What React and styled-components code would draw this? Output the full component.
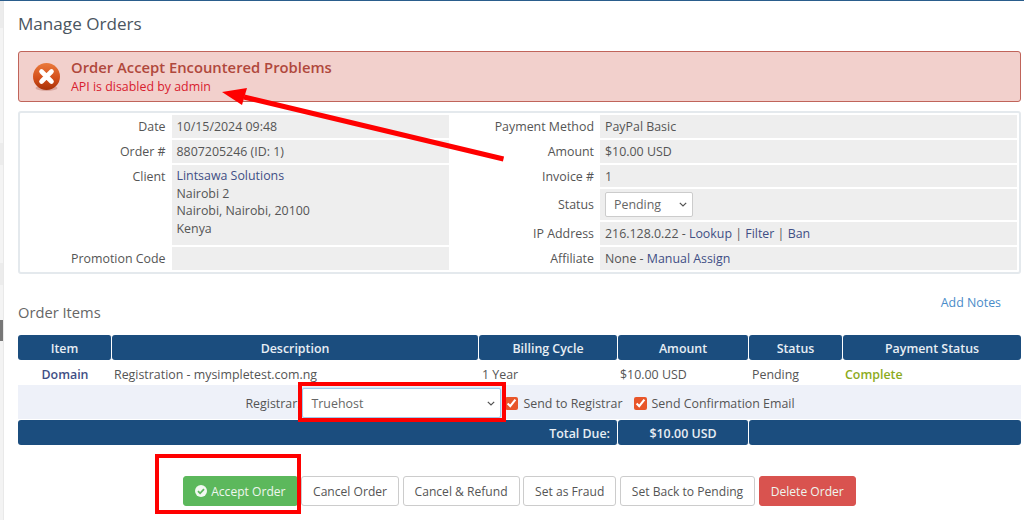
import React from 'react'
import styled, {createGlobalStyle} from 'styled-components'

const GlobalStyle = createGlobalStyle`
  html, body {
    margin: 0;
    padding: 0;
    background: #fff;
    font-family: "Open Sans", "Noto Sans", sans-serif;
    font-size: 12.4px;
    color: #555;
    overflow: hidden;
  }
`

const Page = styled.div`
  position: relative;
  display: flex;
  width: 1024px;
  height: 520px;
  overflow: hidden;
  border-top: 1px solid #2a5d8c;
  box-sizing: border-box;
`

const Sidebar = styled.div`
  display: flex;
  flex-direction: column;
  flex: 0 0 4px;
  background: #f3f3f3;
  border-right: 1px solid #e9e9e9;
  box-sizing: border-box;
`

const SidePatch = styled.div`
  flex: 0 0 ${p => p.$h}px;
  background: ${p => p.$color};
`

const Main = styled.div`
  flex: 1;
  min-width: 0;
  padding: 11px 3px 0 14px;
`

const Title = styled.h1`
  margin: 0 0 16px;
  font-size: 17.1px;
  line-height: 23px;
  font-weight: 400;
  color: #4a5560;
`

const Alert = styled.div`
  display: flex;
  align-items: center;
  height: 49px;
  padding-left: 14px;
  background: #f2d0cc;
  border: 1px solid #c0645a;
  border-radius: 3px;
  margin-bottom: 9px;
`

const AlertText = styled.div`
  margin-left: 11px;
`

const AlertTitle = styled.div`
  font-size: 14.8px;
  line-height: 18px;
  font-weight: 600;
  color: #b0483c;
`

const AlertBody = styled.div`
  margin-top: 2px;
  line-height: 18px;
  color: #d8202f;
`

const Details = styled.div`
  display: grid;
  grid-template-columns: 149.5px 277.5px 151px 417px;
  grid-template-rows: 23px 23px 22px 31px 23px 23px;
  row-gap: 2px;
  padding: 2px;
  border: 2px solid #e4e9ed;
  border-radius: 3px;
  margin-bottom: 20px;
`

const Label = styled.div`
  padding-right: 6px;
  text-align: right;
  line-height: 23px;
  align-self: ${p => (p.$center ? 'center' : 'start')};
`

const Value = styled.div`
  padding: 0 5px;
  line-height: 23px;
  background: #eee;
  display: flex;
  align-items: center;
`

const AddressValue = styled.div`
  grid-row: span 3;
  padding: 2px 5px 0;
  line-height: 17.6px;
  background: #eee;
`

const Link = styled.a`
  color: #3f4f85;
  text-decoration: none;
`

const chevron = encodeURIComponent(
  '<svg xmlns="http://www.w3.org/2000/svg" width="8" height="5" viewBox="0 0 8 5"><path d="M.8.8L4 4l3.2-3.2" fill="none" stroke="#555" stroke-width="1.2"/></svg>'
)

const Select = styled.select`
  appearance: none;
  width: ${p => p.$w}px;
  height: ${p => p.$h}px;
  margin-left: ${p => p.$gap || 0}px;
  padding: 0 0 0 8px;
  font: inherit;
  color: #666;
  background: #fff url("data:image/svg+xml,${chevron}") no-repeat right 5px center;
  border: 1px solid ${p => (p.$focus ? '#9ecaed' : '#ccc')};
  border-radius: 2px;
  box-shadow: ${p => (p.$focus ? '0 0 2px #9ecaed' : 'none')};
`

const ItemsHead = styled.div`
  display: flex;
  justify-content: space-between;
  align-items: flex-start;
  height: 41px;
`

const SubTitle = styled.h2`
  margin: 8px 0 0;
  font-size: 14.7px;
  line-height: 20px;
  font-weight: 400;
  color: #666;
`

const AddNotes = styled.a`
  margin: 0 20px 0 0;
  line-height: 18px;
  color: #4a8cc9;
`

const Items = styled.table`
  width: 1003px;
  border-collapse: separate;
  border-spacing: 0;
  table-layout: fixed;
  margin-bottom: 31px;
`

const HeadCell = styled.th`
  height: 24px;
  padding: 1px ${p => (p.$align === 'right' ? '7px' : '0')} 0 0;
  background: #1b4d7e;
  color: #e8eef4;
  font-size: 12.4px;
  font-weight: 600;
  border-right: 1px solid #fff;
  border-radius: 3px;
  text-align: ${p => p.$align || 'center'};
  &:last-child {
    border-right: 0;
  }
`

const Cell = styled.td`
  height: 22px;
  padding: 3px 0 0 ${p => p.$pad}px;
  text-align: ${p => p.$align || 'left'};
  font-weight: ${p => (p.$strong ? 600 : 400)};
  color: ${p => p.$color || '#555'};
`

const AddonCell = styled.td`
  height: 34px;
  padding: 0;
  background: #eef1f9;
  border-bottom: 1px solid #fff;
`

const RegistrarRow = styled.div`
  display: flex;
  align-items: center;
  justify-content: center;
  padding: 2px 0 0 1px;
`

const Check = styled.label`
  display: flex;
  align-items: center;
  gap: 5px;
  margin-left: ${p => p.$gap}px;
  padding-top: 1px;
`

const CheckInput = styled.input`
  width: 13px;
  height: 13px;
  margin: 0;
  accent-color: #e8562a;
`

const Actions = styled.div`
  display: flex;
  justify-content: center;
  gap: 3.5px;
`

const Button = styled.button`
  display: flex;
  align-items: center;
  gap: 4px;
  height: 30px;
  padding: 0 11px;
  font: inherit;
  font-size: 12.1px;
  border-radius: 3px;
  border: 1px solid ${p => (p.$kind === 'success' ? '#5cb85c' : p.$kind === 'danger' ? '#d9534f' : '#ccc')};
  background: ${p => (p.$kind === 'success' ? '#5cb85c' : p.$kind === 'danger' ? '#d9534f' : '#fff')};
  color: ${p => (p.$kind ? '#eef6ee' : '#555')};
`

const Overlay = styled.svg`
  position: absolute;
  left: 0;
  top: -1px;
  pointer-events: none;
`

const RedBox = styled.div`
  position: absolute;
  left: ${p => p.$x}px;
  top: ${p => p.$y}px;
  width: ${p => p.$w}px;
  height: ${p => p.$h}px;
  box-sizing: border-box;
  border: 4px solid #f00;
  pointer-events: none;
`

const ErrorIcon = () => (
  <svg width="27" height="28" viewBox="0 0 27 28">
    <defs>
      <linearGradient id="err" x1="0" y1="0" x2="0" y2="1">
        <stop offset="0" stopColor="#ea7a3c" />
        <stop offset="0.55" stopColor="#d4501c" />
        <stop offset="1" stopColor="#a83208" />
      </linearGradient>
    </defs>
    <ellipse cx="13.5" cy="25" rx="11" ry="3" fill="#d9a79f" />
    <circle cx="13.5" cy="13.5" r="13.5" fill="url(#err)" />
    <path d="M8.5 8.5l10 10M18.5 8.5l-10 10" stroke="#fff" strokeWidth="4.6" strokeLinecap="round" />
  </svg>
)

const CheckCircle = () => (
  <svg width="12" height="12" viewBox="0 0 12 12">
    <circle cx="6" cy="6" r="6" fill="#f2f8f2" />
    <path d="M3 6.2l2.1 2.1L9 4.2" fill="none" stroke="#5cb85c" strokeWidth="1.8" />
  </svg>
)

const heads = ['Item', 'Description', 'Billing Cycle', 'Amount', 'Status', 'Payment Status']
const widths = [94, 367, 139, 131, 94, 178]

const App = () => {
  return (
    <Page>
      <GlobalStyle />
      <Sidebar>
        <SidePatch $h={27} $color="#ececec" />
        <SidePatch $h={115} $color="#f4f4f4" />
        <SidePatch $h={22} $color="#ececec" />
        <SidePatch $h={98} $color="#f4f4f4" />
        <SidePatch $h={22} $color="#ececec" />
        <SidePatch $h={35} $color="#f4f4f4" />
        <SidePatch $h={21} $color="#777" />
      </Sidebar>
      <Main>
        <Title>Manage Orders</Title>
        <Alert>
          <ErrorIcon />
          <AlertText>
            <AlertTitle>Order Accept Encountered Problems</AlertTitle>
            <AlertBody>API is disabled by admin</AlertBody>
          </AlertText>
        </Alert>

        <Details>
          <Label>Date</Label>
          <Value>10/15/2024 09:48</Value>
          <Label>Payment Method</Label>
          <Value>PayPal Basic</Value>

          <Label>Order #</Label>
          <Value>8807205246 (ID: 1)</Value>
          <Label>Amount</Label>
          <Value>$10.00 USD</Value>

          <Label>Client</Label>
          <AddressValue>
            <Link>Lintsawa Solutions</Link><br />
            Nairobi 2<br />
            Nairobi, Nairobi, 20100<br />
            Kenya
          </AddressValue>
          <Label>Invoice #</Label>
          <Value>1</Value>

          <Label />
          <Label $center>Status</Label>
          <Value>
            <Select $w={88} $h={25} defaultValue="Pending">
              <option>Pending</option>
            </Select>
          </Value>

          <Label />
          <Label>IP Address</Label>
          <Value>
            <span>216.128.0.22 - <Link>Lookup</Link> | <Link>Filter</Link> | <Link>Ban</Link></span>
          </Value>

          <Label>Promotion Code</Label>
          <Value />
          <Label>Affiliate</Label>
          <Value>
            <span>None - <Link>Manual Assign</Link></span>
          </Value>
        </Details>

        <ItemsHead>
          <SubTitle>Order Items</SubTitle>
          <AddNotes>Add Notes</AddNotes>
        </ItemsHead>

        <Items>
          <colgroup>
            {widths.map((w, i) => <col key={i} style={{width: w}} />)}
          </colgroup>
          <thead>
            <tr>
              {heads.map(h => <HeadCell key={h}>{h}</HeadCell>)}
            </tr>
          </thead>
          <tbody>
            <tr>
              <Cell $align="center" $pad={0} $strong $color="#3f4f85">Domain</Cell>
              <Cell $pad={2}>Registration - mysimpletest.com.ng</Cell>
              <Cell $pad={3}>1 Year</Cell>
              <Cell $pad={2}>$10.00 USD</Cell>
              <Cell $pad={3}>Pending</Cell>
              <Cell $pad={2} $strong $color="#8cab1c">Complete</Cell>
            </tr>
            <tr>
              <AddonCell colSpan={6}>
                <RegistrarRow>
                  Registrar:
                  <Select $w={199} $h={30} $gap={2} $focus defaultValue="Truehost">
                    <option>Truehost</option>
                  </Select>
                  <Check $gap={4}><CheckInput type="checkbox" defaultChecked readOnly />Send to Registrar</Check>
                  <Check $gap={11}><CheckInput type="checkbox" defaultChecked readOnly />Send Confirmation Email</Check>
                </RegistrarRow>
              </AddonCell>
            </tr>
            <tr>
              <HeadCell colSpan={3} $align="right">Total Due:</HeadCell>
              <HeadCell>$10.00 USD</HeadCell>
              <HeadCell colSpan={2} />
            </tr>
          </tbody>
        </Items>

        <Actions>
          <Button $kind="success"><CheckCircle /> Accept Order</Button>
          <Button>Cancel Order</Button>
          <Button>Cancel &amp; Refund</Button>
          <Button>Set as Fraud</Button>
          <Button>Set Back to Pending</Button>
          <Button $kind="danger">Delete Order</Button>
        </Actions>
      </Main>

      {/* annotations drawn over the screenshot */}
      <Overlay width="1024" height="520">
        <path d="M503.5 159L244 97" stroke="#f00" strokeWidth="5" />
        <path d="M222 92L247 88L242 105Z" fill="#f00" />
      </Overlay>
      <RedBox $x={298} $y={381} $w={208} $h={40} />
      <RedBox $x={155} $y={453} $w={146} $h={60} />
    </Page>
  )
}

export default App
